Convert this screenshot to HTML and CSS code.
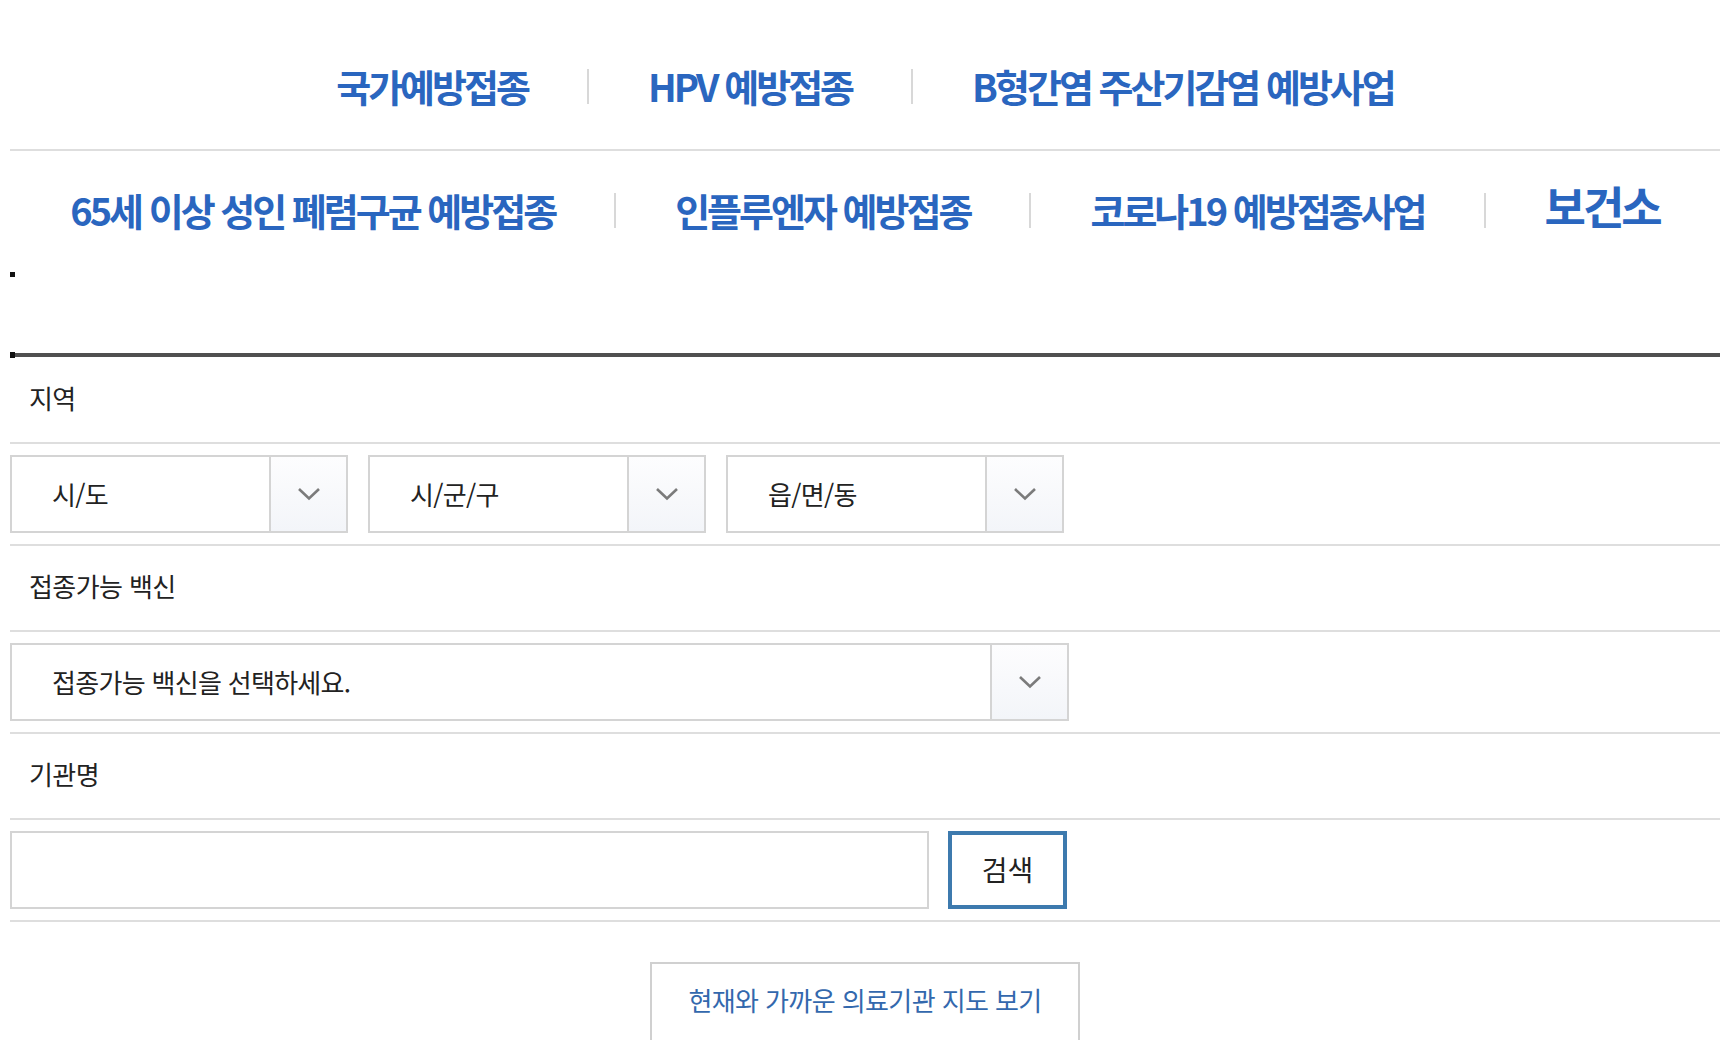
FILE: index.html
```html
<!DOCTYPE html>
<html lang="ko">
<head>
<meta charset="utf-8">
<title>예방접종 의료기관 찾기</title>
<link rel="stylesheet" href="styles.css">
</head>
<body>
<div class="page">
  <nav class="tabs">
    <ul class="tab-row tab-row-first">
      <li class="tab">국가예방접종</li>
      <li class="sep"></li>
      <li class="tab">HPV 예방접종</li>
      <li class="sep"></li>
      <li class="tab">B형간염 주산기감염 예방사업</li>
    </ul>
    <ul class="tab-row tab-row-second">
      <li class="tab">65세 이상 성인 폐렴구균 예방접종</li>
      <li class="sep"></li>
      <li class="tab">인플루엔자 예방접종</li>
      <li class="sep"></li>
      <li class="tab">코로나19 예방접종사업</li>
      <li class="sep"></li>
      <li class="tab tab-big">보건소</li>
    </ul>
  </nav>

  <div class="dot dot-single"></div>

  <div class="rule">
    <span class="dot"></span>
    <span class="rule-line"></span>
  </div>

  <div class="form">
    <div class="label-row">지역</div>
    <div class="field-row">
      <div class="select select-small">
        <span class="select-text">시/도</span>
        <span class="select-arrow"><svg width="24" height="14" viewBox="0 0 24 14"><path d="M2 2 L12 11.5 L22 2" fill="none" stroke="#7b7b7b" stroke-width="2.6"/></svg></span>
      </div>
      <div class="select select-small">
        <span class="select-text">시/군/구</span>
        <span class="select-arrow"><svg width="24" height="14" viewBox="0 0 24 14"><path d="M2 2 L12 11.5 L22 2" fill="none" stroke="#7b7b7b" stroke-width="2.6"/></svg></span>
      </div>
      <div class="select select-small">
        <span class="select-text">읍/면/동</span>
        <span class="select-arrow"><svg width="24" height="14" viewBox="0 0 24 14"><path d="M2 2 L12 11.5 L22 2" fill="none" stroke="#7b7b7b" stroke-width="2.6"/></svg></span>
      </div>
    </div>

    <div class="label-row">접종가능 백신</div>
    <div class="field-row">
      <div class="select select-wide">
        <span class="select-text">접종가능 백신을 선택하세요.</span>
        <span class="select-arrow"><svg width="24" height="14" viewBox="0 0 24 14"><path d="M2 2 L12 11.5 L22 2" fill="none" stroke="#7b7b7b" stroke-width="2.6"/></svg></span>
      </div>
    </div>

    <div class="label-row">기관명</div>
    <div class="field-row">
      <input class="name-input" type="text" aria-label="기관명">
      <button class="search-btn" type="button">검색</button>
    </div>
  </div>

  <div class="map-wrap">
    <button class="map-btn" type="button">현재와 가까운 의료기관 지도 보기</button>
  </div>
</div>
</body>
</html>
```

FILE: styles.css
```css
html, body {
  margin: 0;
  padding: 0;
  background: #fff;
}

body {
  font-family: "Noto Sans CJK KR", "Noto Sans", sans-serif;
  color: #222;
  overflow: hidden;
}

.page {
  padding-left: 10px;
}

/* ---------- tabs ---------- */
.tab-row {
  list-style: none;
  margin: 0;
  display: flex;
  justify-content: center;
  align-items: center;
}

.tab-row-first {
  padding: 58px 0 35px;
  border-bottom: 2px solid #dedede;
}

.tab-row-second {
  padding: 31px 0 0;
}

.tab {
  font-size: 38px;
  line-height: 56px;
  font-weight: 700;
  letter-spacing: -3px;
  color: #2a66bf;
  white-space: nowrap;
}

.tab-big {
  font-size: 45px;
  line-height: 48px;
  padding-bottom: 8px;
  letter-spacing: -3px;
}

.sep {
  width: 2px;
  height: 35px;
  background: #d8d8d8;
  margin: 0 59px;
}

/* ---------- dots & rule ---------- */
.dot {
  display: block;
  width: 5px;
  height: 6px;
  background: #111;
}

.dot-single {
  margin-top: 34px;
  height: 5px;
}

.rule {
  margin-top: 75px;
  display: flex;
  align-items: center;
}

.rule-line {
  flex: 1;
  height: 4px;
  background: #505050;
}

/* ---------- form ---------- */
.label-row {
  box-sizing: border-box;
  height: 86px;
  display: flex;
  align-items: center;
  padding: 0 0 6px 19px;
  font-size: 26px;
  letter-spacing: -0.6px;
  color: #222;
  border-bottom: 2px solid #dedede;
}

.field-row {
  display: flex;
  gap: 20px;
  padding: 11px 0;
  border-bottom: 2px solid #dedede;
}

.select {
  box-sizing: border-box;
  height: 78px;
  border: 2px solid #d4d4d4;
  display: flex;
  align-items: stretch;
  background: #fff;
}

.select-small {
  width: 338px;
}

.select-wide {
  width: 1059px;
}

.select-text {
  flex: 1;
  display: flex;
  align-items: center;
  padding: 0 0 2px 40px;
  font-size: 26px;
  letter-spacing: -0.7px;
  color: #222;
}

.select-arrow {
  width: 75px;
  border-left: 2px solid #d4d4d4;
  background: linear-gradient(#fdfdfe, #f3f5f9);
  display: flex;
  align-items: center;
  justify-content: center;
}

.name-input {
  box-sizing: border-box;
  width: 919px;
  height: 78px;
  border: 2px solid #d4d4d4;
  margin: 0;
  padding: 0 20px;
  font: inherit;
  outline: none;
}

.search-btn {
  box-sizing: border-box;
  width: 119px;
  height: 78px;
  margin: 0 0 0 -1px;
  border: 4px solid #3d7aae;
  background: #fff;
  font-family: inherit;
  font-size: 28px;
  letter-spacing: 0;
  color: #222;
  padding: 0 0 2px;
  cursor: pointer;
}

/* ---------- map button ---------- */
.map-wrap {
  display: flex;
  justify-content: center;
  padding-top: 40px;
}

.map-btn {
  box-sizing: border-box;
  width: 430px;
  height: 100px;
  border: 2px solid #d0d0d0;
  background: #fff;
  font-family: inherit;
  font-size: 26px;
  letter-spacing: -0.6px;
  color: #3368ad;
  padding: 0 0 26px;
  cursor: pointer;
}
```
